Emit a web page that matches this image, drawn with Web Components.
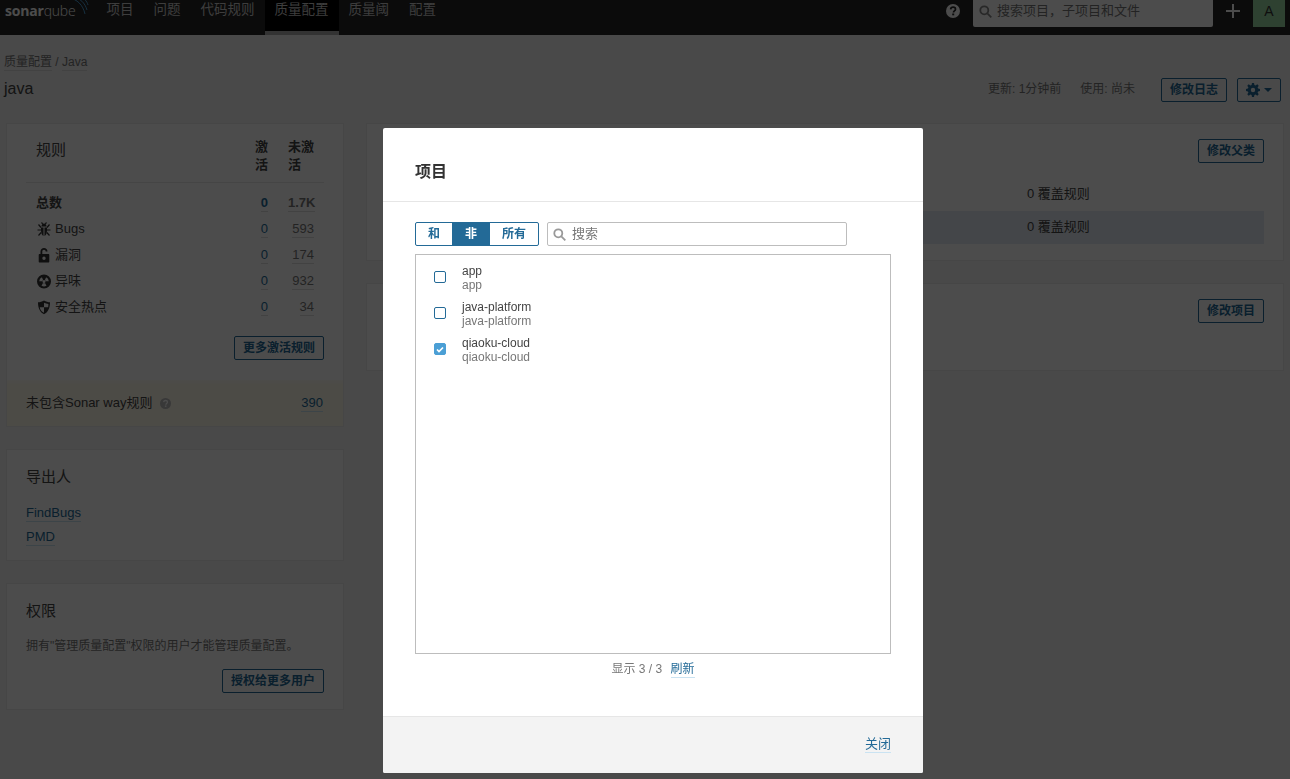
<!DOCTYPE html>
<html lang="zh">
<head>
<meta charset="utf-8">
<title>质量配置 / Java</title>
<style>
	html, body {
		margin: 0;
		height: 100%;
		overflow: hidden;
		background: #f3f3f3;
		color: #444;
		font: 13px/18px "Liberation Sans", "Noto Sans CJK SC", sans-serif;
	}
</style>
</head>
<body>
<sq-nav></sq-nav>
<sq-head></sq-head>
<sq-layout>
	<sq-card slot="left" flush>
		<sq-rules></sq-rules>
	</sq-card>
	<sq-card slot="left" heading="导出人" style="height: 112px">
		<sq-link block>FindBugs</sq-link>
		<sq-link block>PMD</sq-link>
	</sq-card>
	<sq-card slot="left" heading="权限" style="height: 127px">
		<sq-perm></sq-perm>
	</sq-card>
	<sq-inherit slot="right"></sq-inherit>
	<sq-projects slot="right"></sq-projects>
</sq-layout>
<sq-modal heading="项目">
	<sq-select-list></sq-select-list>
</sq-modal>

<script>
const FONT = '"Liberation Sans", "Noto Sans CJK SC", sans-serif';

function shadow(el, html) {
	el.attachShadow({ mode: 'open' });
	el.shadowRoot.innerHTML = html;
}

class SqLink extends HTMLElement {
	constructor() {
		super();
		shadow(this, `
			<style>
				:host { display: inline; }
				:host([block]) { display: block; margin-bottom: 6px; }
				span { color: var(--link, #236a97); border-bottom: 1px solid var(--link-line, #cae3f2); padding-bottom: 1px; }
			</style>
			<span><slot></slot></span>`);
	}
}
customElements.define('sq-link', SqLink);

class SqButton extends HTMLElement {
	constructor() {
		super();
		shadow(this, `
			<style>
				:host { display: inline-flex; }
				div {
					display: flex;
					align-items: center;
					gap: 4px;
					box-sizing: border-box;
					height: 24px;
					padding: 0 8px;
					border: 1px solid #236a97;
					border-radius: 2px;
					color: #236a97;
					font-size: 12px;
					font-weight: bold;
					white-space: nowrap;
				}
			</style>
			<div><slot></slot></div>`);
	}
}
customElements.define('sq-button', SqButton);

class SqNav extends HTMLElement {
	constructor() {
		super();
		const items = ['项目', '问题', '代码规则', '质量配置', '质量阈', '配置'];
		shadow(this, `
			<style>
				:host { display: flex; height: 35px; background: #262626; color: #fff; overflow: hidden; font-size: 13.5px; }
				.logo { position: relative; width: 96.6px; flex: none; height: 35px; }
				.logo b, .logo i { font: 14px/18px "Open Sans", ${FONT}; color: #fff; }
				.word { position: absolute; left: 5px; top: 2px; white-space: nowrap; letter-spacing: -.2px; }
				.word b { font-weight: 700; }
				.word i { font-style: normal; font-weight: 300; }
				.logo svg { position: absolute; left: 66px; top: 0; }
				nav { display: flex; }
				nav a { box-sizing: border-box; height: 35px; padding: 1px 10px 0; color: #ccc; line-height: 18px; }
				nav a.on { background: #000; border-bottom: 4px solid #aaa; }
				.right { margin-left: auto; display: flex; align-items: flex-start; font-size: 13px; }
				.help { margin: 4px 13px 0 0; }
				.search { box-sizing: border-box; width: 240px; height: 27px; background: #fff; border-radius: 0 0 2px 2px; display: flex; align-items: flex-start; padding: 2px 6px 0; gap: 5px; color: #777; }
				.search svg { margin-top: 3px; }
				.plus { margin: 4px 13px 0 13px; }
				.avatar { width: 32px; height: 27px; margin-right: 5px; background: #9ad9a5; color: #333; text-align: center; font-size: 14px; line-height: 23px; }
			</style>
			<div class="logo">
				<span class="word"><b>sonar</b><i>qube</i></span>
				<svg width="24" height="18" viewBox="0 0 24 18" fill="none" stroke="#4b9fd5" stroke-width="1">
					<path d="M3 -2C11 -1 17 5 19 14"/><path d="M7 -3C14 -2 19 3 21 10"/><path d="M13 -4C18 -2 21 1 22 5"/>
				</svg>
			</div>
			<nav>${items.map(t => `<a class="${t === '质量配置' ? 'on' : ''}">${t}</a>`).join('')}</nav>
			<div class="right">
				<svg class="help" width="14" height="14" viewBox="0 0 14 14"><circle cx="7" cy="7" r="7" fill="#fff"/><path d="M4.6 5.3C4.8 3.9 5.8 3.2 7.1 3.2c1.4 0 2.4.8 2.4 2 0 1.700-2 1.800-2 3.300" fill="none" stroke="#262626" stroke-width="1.700"/><rect x="6.200" y="9.500" width="2" height="1.800" fill="#262626"/></svg>
				<div class="search">
					<svg width="13" height="13" viewBox="0 0 13 13" fill="none" stroke="#888" stroke-width="1.800"><circle cx="5.300" cy="5.300" r="4"/><path d="M8.300 8.300l4 4"/></svg>
					<span>搜索项目，子项目和文件</span>
				</div>
				<svg class="plus" width="14" height="14" viewBox="0 0 14 14"><path d="M6 0h2v6h6v2H8v6H6V8H0V6h6z" fill="#fff"/></svg>
				<div class="avatar">A</div>
			</div>`);
	}
}
customElements.define('sq-nav', SqNav);

class SqHead extends HTMLElement {
	constructor() {
		super();
		shadow(this, `
			<style>
				:host { display: block; box-sizing: border-box; height: 88px; padding: 18px 9px 0 4px; }
				.crumb { font-size: 12px; line-height: 18px; color: #777; --link: #777; --link-line: #ddd; }
				.row { display: flex; align-items: center; margin-top: 7px; height: 24px; }
				h1 { margin: -3px 0 0; font-size: 16px; font-weight: normal; color: #444; }
				.meta { margin: -3px 0 0 auto; font-size: 12px; color: #777; display: flex; gap: 19px; }
				sq-button:first-of-type { margin-left: 26px; }
				sq-button + sq-button { margin-left: 10px; }
				svg { display: block; }
				.caret { width: 0; height: 0; border: 4px solid transparent; border-top-color: #236a97; border-bottom: 0; }
			</style>
			<div class="crumb"><sq-link>质量配置</sq-link> / <sq-link>Java</sq-link></div>
			<div class="row">
				<h1>java</h1>
				<div class="meta"><span>更新: 1分钟前</span><span>使用: 尚未</span></div>
				<sq-button>修改日志</sq-button>
				<sq-button>
					<svg width="14" height="14" viewBox="0 0 14 14"><path fill="#236a97" fill-rule="evenodd" d="M6 0h2l.4 1.900 1.200.5L11.300 1.300l1.400 1.400-1.100 1.700.5 1.200L14 6v2l-1.900.4-.5 1.200 1.100 1.700-1.400 1.400-1.700-1.100-1.200.5L8 14H6l-.4-1.900-1.200-.5-1.700 1.100-1.400-1.400 1.100-1.700-.5-1.200L0 8V6l1.900-.4.5-1.200-1.100-1.700 1.400-1.400 1.700 1.100 1.200-.5zM7 4.800a2.200 2.200 0 1 0 0 4.400 2.200 2.200 0 0 0 0-4.400z"/></svg>
					<span class="caret"></span>
				</sq-button>
			</div>`);
	}
}
customElements.define('sq-head', SqHead);

class SqLayout extends HTMLElement {
	constructor() {
		super();
		shadow(this, `
			<style>
				:host { display: grid; grid-template-columns: 338px 918px; gap: 22px; padding: 0 6px; align-items: start; }
				div { display: flex; flex-direction: column; gap: 22px; }
			</style>
			<div><slot name="left"></slot></div>
			<div><slot name="right"></slot></div>`);
	}
}
customElements.define('sq-layout', SqLayout);

class SqCard extends HTMLElement {
	constructor() {
		super();
		const heading = this.getAttribute('heading');
		shadow(this, `
			<style>
				:host { display: block; box-sizing: border-box; background: #fff; border: 1px solid #ebebeb; padding: 18px 19px; }
				:host([flush]) { padding: 0; }
				h3 { margin: 0 0 18px; font-size: 15px; line-height: 18px; font-weight: normal; color: #444; }
			</style>
			${heading ? `<h3>${heading}</h3>` : ''}
			<slot></slot>`);
	}
}
customElements.define('sq-card', SqCard);

const ICONS = {
	bug: '<path d="M5.500 5.500C5.500 3.600 6.600 2.600 8 2.600s2.500 1 2.500 2.900zM5 6.500h2.500v8.500C6 14.400 5 12 5 9.500zM8.500 6.500H11v3c0 2.500-1 4.900-2.500 5.500z"/><path fill="none" stroke="#333" stroke-width="1.200" d="M2.500 3.500L5 6.500M13.500 3.500L11 6.500M1.500 9H5M14.500 9H11M2.500 14.500l2.700-3M13.500 14.500l-2.700-3M5.500 1.500l1.200 1.300M10.500 1.500L9.300 2.800"/>',
	lock: '<path fill-rule="evenodd" d="M4.500 7V4.500C4.500 2.300 6 .9 8 .9s3.500 1.400 3.500 3.600H9.700c0-1-.7-1.800-1.700-1.800S6.300 3.500 6.300 4.500V7h6c.6 0 1 .4 1 1v6.500c0 .6-.4 1-1 1H3.700c-.6 0-1-.4-1-1V8c0-.6.4-1 1-1zM8 9.500a1.700 1.700 0 1 0 0 3.400 1.700 1.700 0 0 0 0-3.400z"/>',
	smell: '<path fill-rule="evenodd" d="M8 1.500a7 7 0 1 1 0 14 7 7 0 0 1 0-14zM8 7a1.500 1.500 0 1 0 0 3 1.500 1.500 0 0 0 0-3zM5.900 4.300A4.800 4.800 0 0 0 3.200 8.300h3.100c0-.6.3-1.100.8-1.400zm4.200 0L8.900 6.900c.5.300.8.800.8 1.400h3.100a4.800 4.800 0 0 0-2.700-4zM7 10.100l-1.500 2.700a4.800 4.800 0 0 0 5 0L9 10.100a2.200 2.200 0 0 1-2 0z"/>',
	shield: '<path fill-rule="evenodd" d="M8 1.500c2 1.200 4 1.800 6 1.800 0 5.200-1.500 9.700-6 12-4.500-2.300-6-6.800-6-12 2 0 4-.6 6-1.800zM8 3.700v4.500H3.800c.3 2.300 1.700 4.300 4.200 5.500V8.200h4.200c.1-.9.2-2 .2-3.200-1.500-.2-3-.6-4.400-1.300z"/>',
};

class SqRules extends HTMLElement {
	constructor() {
		super();
		const rows = [
			['bug', 'Bugs', '593'],
			['lock', '漏洞', '174'],
			['smell', '异味', '932'],
			['shield', '安全热点', '34'],
		];
		shadow(this, `
			<style>
				:host { display: block; }
				.tbl { padding: 10px 19px 0 19px; }
				.top { display: grid; grid-template-columns: 1fr 13px 26px; column-gap: 20px; padding: 4px 10px 8px; border-bottom: 1px solid #e6e6e6; }
				.top b { font-size: 13px; font-weight: bold; line-height: 18px; color: #444; }
				.ttl { font-size: 15px; align-self: start; padding-top: 3px; }
				.row { display: grid; grid-template-columns: 1fr 13px 26px; column-gap: 20px; padding: 0 10px; height: 26px; align-items: center; }
				.row.total { margin-top: 6px; height: 27px; font-weight: bold; }
				.name { display: flex; align-items: center; gap: 3px; }
				.name svg { flex: none; }
				.num { text-align: right; }
				.num sq-link { --link-line: #ddd; }
				.grey { --link: #777; }
				.foot { display: flex; justify-content: flex-end; padding: 16px 0 20px; }
				.band { display: flex; justify-content: space-between; height: 46px; box-sizing: border-box; padding: 14px 20px 0 19px; background: linear-gradient(#fffdf5, #fffaea 12%, #fffbec); }
				.band svg { margin-left: 8px; vertical-align: -2px; }
			</style>
			<div class="tbl">
				<div class="top">
					<span class="ttl">规则</span><b>激活</b><b>未激活</b>
				</div>
				<div class="row total">
					<span>总数</span>
					<span class="num"><sq-link>0</sq-link></span>
					<span class="num grey"><sq-link>1.7K</sq-link></span>
				</div>
				${rows.map(r => `
				<div class="row">
					<span class="name"><svg width="16" height="16" viewBox="0 0 16 16" fill="#333">${ICONS[r[0]]}</svg>${r[1]}</span>
					<span class="num"><sq-link>0</sq-link></span>
					<span class="num grey"><sq-link>${r[2]}</sq-link></span>
				</div>`).join('')}
				<div class="foot"><sq-button>更多激活规则</sq-button></div>
			</div>
			<div class="band">
				<span>未包含Sonar way规则<svg width="11" height="11" viewBox="0 0 14 14"><circle cx="7" cy="7" r="7" fill="#bbb"/><path d="M4.600 5.300C4.800 3.900 5.800 3.200 7.100 3.200c1.400 0 2.400.8 2.400 2 0 1.700-2 1.800-2 3.300" fill="none" stroke="#fff" stroke-width="1.700"/><rect x="6.200" y="9.500" width="2" height="1.800" fill="#fff"/></svg></span>
				<sq-link>390</sq-link>
			</div>`);
	}
}
customElements.define('sq-rules', SqRules);

class SqPerm extends HTMLElement {
	constructor() {
		super();
		shadow(this, `
			<style>
				:host { display: block; font-size: 12px; color: #777; }
				p { margin: -1px 0 14px; line-height: 18px; white-space: nowrap; }
				div { display: flex; justify-content: flex-end; }
			</style>
			<p>拥有"管理质量配置"权限的用户才能管理质量配置。</p>
			<div><sq-button>授权给更多用户</sq-button></div>`);
	}
}
customElements.define('sq-perm', SqPerm);

class SqInherit extends HTMLElement {
	constructor() {
		super();
		shadow(this, `
			<style>
				:host { display: block; box-sizing: border-box; height: 138px; background: #fff; border: 1px solid #ebebeb; padding: 15px 19px 0; }
				.act { display: flex; justify-content: flex-end; }
				.r { box-sizing: border-box; height: 33px; padding: 7px 0 0 641px; color: #444; }
				.r.first { margin-top: 15px; }
				.r.hl { background: #e4ecf3; }
			</style>
			<div class="act"><sq-button>修改父类</sq-button></div>
			<div class="r first">0 覆盖规则</div>
			<div class="r hl">0 覆盖规则</div>`);
	}
}
customElements.define('sq-inherit', SqInherit);

class SqProjects extends HTMLElement {
	constructor() {
		super();
		shadow(this, `
			<style>
				:host { display: flex; justify-content: flex-end; align-items: flex-start; box-sizing: border-box; height: 88px; background: #fff; border: 1px solid #ebebeb; padding: 15px 19px 0; }
			</style>
			<sq-button>修改项目</sq-button>`);
	}
}
customElements.define('sq-projects', SqProjects);

class SqModal extends HTMLElement {
	constructor() {
		super();
		shadow(this, `
			<style>
				:host { position: fixed; inset: 0; background: rgba(0, 0, 0, .7); }
				.dlg { position: absolute; left: 383px; top: 128px; width: 540px; height: 645px; display: flex; flex-direction: column; background: #fff; border-radius: 2px; overflow: hidden; }
				header { box-sizing: border-box; height: 74px; padding: 32px 32px 0; border-bottom: 1px solid #e6e6e6; }
				h2 { margin: 0; font-size: 16px; line-height: 24px; font-weight: bold; color: #333; }
				main { flex: 1; padding: 20px 32px 0; }
				footer { box-sizing: border-box; height: 57px; background: #f3f3f3; border-top: 1px solid #e6e6e6; display: flex; align-items: center; justify-content: flex-end; padding: 0 32px 2px; }
			</style>
			<div class="dlg">
				<header><h2>${this.getAttribute('heading')}</h2></header>
				<main><slot></slot></main>
				<footer><sq-link>关闭</sq-link></footer>
			</div>`);
	}
}
customElements.define('sq-modal', SqModal);

class SqSelectList extends HTMLElement {
	constructor() {
		super();
		const items = [['app', false], ['java-platform', false], ['qiaoku-cloud', true]];
		shadow(this, `
			<style>
				:host { display: block; font-size: 12px; }
				.bar { display: flex; gap: 8px; height: 24px; }
				.seg { display: flex; box-sizing: border-box; height: 24px; border: 1px solid #236a97; border-radius: 2px; overflow: hidden; font-weight: bold; color: #236a97; line-height: 22px; text-align: center; }
				.seg span:nth-child(1) { width: 36px; }
				.seg span:nth-child(2) { width: 38px; background: #236a97; color: #fff; }
				.seg span:nth-child(3) { width: 48px; }
				.find { box-sizing: border-box; width: 300px; height: 24px; border: 1px solid #bdbdbd; border-radius: 2px; display: flex; align-items: center; gap: 6px; padding: 0 5px; color: #777; font-size: 13px; }
				.box { box-sizing: border-box; height: 400px; margin-top: 8px; border: 1px solid #bdbdbd; padding: 5px 0 0 18px; }
				.item { display: flex; align-items: center; gap: 16px; height: 36px; }
				.chk { box-sizing: border-box; width: 12px; height: 12px; border: 1px solid #236a97; border-radius: 2px; flex: none; margin-top: -2px; }
				.chk.on { background: #4b9fd5; border-color: #4b9fd5; display: flex; align-items: center; justify-content: center; }
				.t { line-height: 14px; color: #444; }
				.t small { display: block; font-size: 12px; color: #777; }
				.more { text-align: center; margin-top: 6px; color: #777; line-height: 18px; }
				sq-link { margin-left: 5px; }
			</style>
			<div class="bar">
				<div class="seg"><span>和</span><span>非</span><span>所有</span></div>
				<div class="find">
					<svg width="13" height="13" viewBox="0 0 13 13" fill="none" stroke="#999" stroke-width="1.800"><circle cx="5.300" cy="5.300" r="4"/><path d="M8.300 8.300l4 4"/></svg>
					<span>搜索</span>
				</div>
			</div>
			<div class="box">
				${items.map(i => `
				<div class="item">
					<span class="chk ${i[1] ? 'on' : ''}">${i[1] ? '<svg width="8" height="7" viewBox="0 0 8 7"><path d="M1 3.500l2 2 4-4" fill="none" stroke="#fff" stroke-width="1.700"/></svg>' : ''}</span>
					<div class="t">${i[0]}<small>${i[0]}</small></div>
				</div>`).join('')}
			</div>
			<div class="more">显示 3 / 3 <sq-link>刷新</sq-link></div>`);
	}
}
customElements.define('sq-select-list', SqSelectList);
</script>
</body>
</html>
